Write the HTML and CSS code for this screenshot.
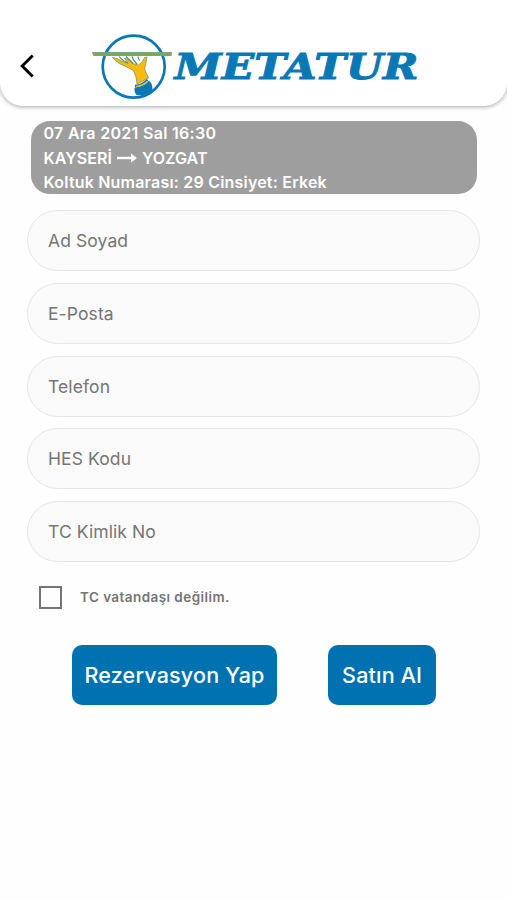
FILE: index.html
```html
<!DOCTYPE html>
<html lang="tr">
<head>
<meta charset="utf-8">
<meta name="viewport" content="width=device-width, initial-scale=1">
<title>Metatur</title>
<link rel="stylesheet" href="styles.css">
</head>
<body>
<header class="header">
  <button class="back" type="button" aria-label="Geri">
    <svg width="16" height="26" viewBox="0 0 16 26"><path d="M12.7 2.4 2.2 13l10.5 10.600" fill="none" stroke="#000" stroke-width="2.9"/></svg>
  </button>
  <svg class="logo" width="330" height="70" viewBox="90 32 330 70">
    <circle cx="133.7" cy="66.6" r="31" fill="#fff" stroke="#0b78b6" stroke-width="2.7"/>
    <path d="M112.500 57.500 117 58.500 123 61.500 128 63.500 124.500 58 129 60 133 63.500 138.500 65 142.500 61.500 144.500 57.500 147 57 146 63 144.500 69 148.500 78 137 84 136 77 133.300 70.500 126 66.500 119 63.500z" fill="#f9b90f" stroke="#5d9279" stroke-width=".7" stroke-linejoin="round"/>
    <path d="M119 56.500q3 4 9 6.500M126 56.500l7 7M132 56.500q1 4 5 7.500M138 56.500q0 3 2 4" fill="none" stroke="#56916f" stroke-width="1.200"/>
    <path d="M134.700 87.500q-1 4 1.800 7.500 9.500 1.500 15.500-4.500 1.500-5.500-3-10-4 6-14.300 7z" fill="#0b78b6"/>
    <path d="M135 86q8-.8 12.500-6.300" fill="none" stroke="#0b78b6" stroke-width="2.400"/>
    <path d="M136 86.500q7.500-1 11.500-5.500" fill="none" stroke="#f9b90f" stroke-width="1.200"/>
    <path d="M92 52.300h80.200l-.8 3.600H93.500z" fill="#86a35b"/>
    <path d="M92 52.500h79" fill="none" stroke="#62a294" stroke-width=".7"/>
    <text class="brand" x="174.500" y="79" textLength="244" lengthAdjust="spacingAndGlyphs">METATUR</text>
  </svg>
</header>
<main class="content">
  <section class="trip">
    <p class="date">07 Ara 2021 Sal 16:30</p>
    <p class="route"><span>KAYSERİ</span>
      <svg width="20" height="12" viewBox="0 0 20 12"><path d="M0 6h15" stroke="#fff" stroke-width="2.400"/><path d="M14 1.500v9l6-4.500z" fill="#fff"/></svg>
      <span>YOZGAT</span></p>
    <p class="seat">Koltuk Numarası: 29 Cinsiyet: Erkek</p>
  </section>
  <form class="form">
    <input class="field" type="text" placeholder="Ad Soyad">
    <input class="field" type="text" placeholder="E-Posta">
    <input class="field" type="text" placeholder="Telefon">
    <input class="field" type="text" placeholder="HES Kodu">
    <input class="field" type="text" placeholder="TC Kimlik No">
    <label class="check"><input class="box" type="checkbox"><span>TC vatandaşı değilim.</span></label>
    <div class="actions">
      <button class="btn reserve" type="button">Rezervasyon Yap</button>
      <button class="btn buy" type="button">Satın Al</button>
    </div>
  </form>
</main>
</body>
</html>
```
FILE: styles.css
```css
* { box-sizing: border-box; }
body {
  margin: 0;
  min-height: 900px;
  background: #fefefe;
  font-family: Inter, "Liberation Sans", sans-serif;
  overflow: hidden;
}
.header {
  height: 106px;
  padding: 32px 0 0 20px;
  display: flex;
  align-items: flex-start;
  background: #fff;
  border-radius: 0 0 23px 23px;
  box-shadow: 0 1px 4px rgba(0, 0, 0, .35);
}
.back {
  width: 70px;
  height: 68px;
  padding: 0;
  border: 0;
  background: none;
  display: flex;
  align-items: center;
}
.back svg, .logo { display: block; }
.brand {
  font: italic bold 35.500px "DejaVu Serif", serif;
  fill: #0b78b6;
  stroke: #0b78b6;
  stroke-width: 1px;
}
.content { padding: 15px 27px 0; }
.trip {
  height: 73px;
  margin: 0 3px 0 4px;
  padding-left: 12.500px;
  border-radius: 19px;
  background: #9e9e9e;
  color: #fff;
  font-size: 16px;
  font-weight: 600;
  line-height: 24.500px;
  white-space: nowrap;
}
.trip p { margin: 0; }
.date { letter-spacing: .3px; }
.seat { letter-spacing: .2px; }
.route { display: flex; align-items: center; gap: 5px; letter-spacing: .05px; }
.form { margin-top: 16px; display: flex; flex-direction: column; gap: 11.800px; }
.field {
  width: 100%;
  height: 61px;
  padding: 0 20px;
  border: 1px solid #e6e6e6;
  border-radius: 31px;
  background: #fafafa;
  font: 400 17.500px Inter, sans-serif;
  letter-spacing: .1px;
  outline: 0;
}
.field::placeholder { color: #757575; opacity: 1; }
.check {
  display: flex;
  align-items: center;
  gap: 18px;
  height: 24px;
  margin: 11.500px 0 0 12px;
  color: #757575;
  font-size: 13.500px;
  font-weight: 600;
  letter-spacing: .43px;
}
.box {
  appearance: none;
  width: 23px;
  height: 23px;
  margin: 0;
  border: 2px solid #757575;
}
.actions { display: flex; gap: 51px; margin: 23.500px 0 0 45px; }
.btn {
  height: 60px;
  padding: 0;
  border: 0;
  border-radius: 10px;
  background: #0072b2;
  color: #fff;
  font: 500 21.500px Inter, sans-serif;
  letter-spacing: .2px;
  white-space: nowrap;
}
.reserve { width: 205px; }
.buy { width: 108px; }
```
